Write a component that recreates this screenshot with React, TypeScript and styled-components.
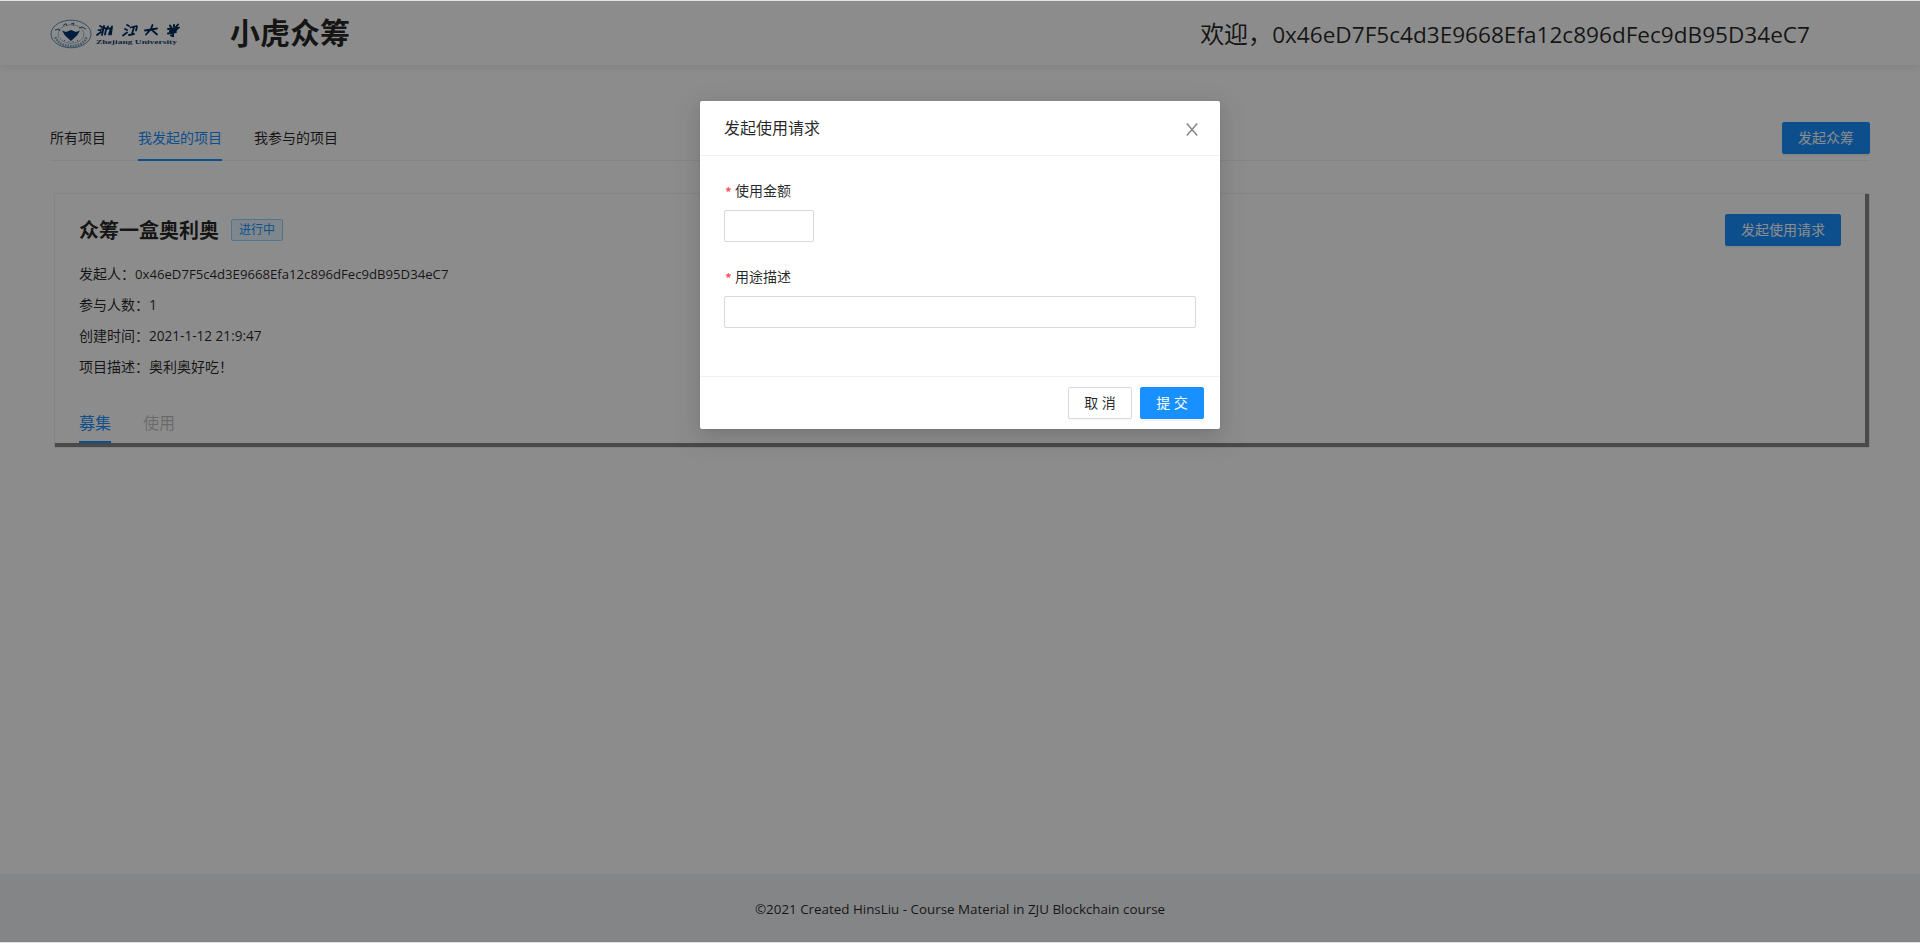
import React from 'react';
import styled, { createGlobalStyle, css } from 'styled-components';

const ADDRESS = '0x46eD7F5c4d3E9668Efa12c896dFec9dB95D34eC7';

const GlobalStyle = createGlobalStyle`
  *, *::before, *::after { box-sizing: border-box; }
  body {
    margin: 0;
    background: #dfe1e5;
    color: rgba(0, 0, 0, 0.85);
    font: 14px/22px 'Open Sans', 'Noto Sans CJK SC', sans-serif;
    font-weight: 400;
  }
  h1, h2, p { margin: 0; }
`;

const Page = styled.div`
  height: 943px;
  padding: 1px 0;
  overflow: hidden;
  position: relative;
`;

const Layout = styled.div`
  height: 941px;
  display: flex;
  flex-direction: column;
  background: #fff;
`;

const Header = styled.header`
  height: 64px;
  flex: none;
  display: flex;
  align-items: center;
  padding: 0 110px 0 50px;
  box-shadow: 0 2px 8px #e6e7e8;
`;

const Brand = styled.h1`
  margin-left: 50px;
  font-size: 30px;
  line-height: 64px;
  font-weight: 700;
`;

const Latin = styled.span<{ $scale: number }>`
  font-size: ${p => p.$scale}em;
`;

const Welcome = styled.div`
  margin-left: auto;
  padding-top: 2px;
  font-size: 24px;
  line-height: 62px;
`;

const Main = styled.main`
  flex: 1;
  padding: 50px 50px 0;
`;

const PageTabs = styled.nav`
  height: 46px;
  display: flex;
  gap: 32px;
  border-bottom: 1px solid #f0f0f0;
`;

const PageTab = styled.a<{ $active?: boolean }>`
  height: 46px;
  line-height: 46px;
  ${p => p.$active && css`
    color: #1890ff;
    border-bottom: 2px solid #1890ff;
  `}
`;

const TabAction = styled.div`
  margin-left: auto;
  padding-top: 7px;
`;

const Button = styled.button<{ $primary?: boolean; $spaced?: boolean }>`
  height: 32px;
  padding: 0 15px;
  border: 1px solid ${p => (p.$primary ? '#1890ff' : '#d9d9d9')};
  border-radius: 2px;
  background: ${p => (p.$primary ? '#1890ff' : '#fff')};
  color: ${p => (p.$primary ? '#fff' : 'rgba(0, 0, 0, 0.85)')};
  font: inherit;
  line-height: 30px;
  box-shadow: 0 2px 0 ${p => (p.$primary ? 'rgba(0, 0, 0, 0.045)' : 'rgba(0, 0, 0, 0.015)')};
  white-space: pre;
  ${p => p.$spaced && css`
    width: 64px;
  `}
`;

const Card = styled.section`
  height: 250px;
  margin: 32px 5px 0 4px;
  padding: 20px 24px 0 24px;
  border: 1px solid #f0f0f0;
  border-right: 0;
  border-bottom: 0;
  box-shadow: 2.5px 2.5px 1px 1.5px #888;
`;

const CardHead = styled.div`
  display: flex;
  justify-content: space-between;
`;

const CardTitle = styled.div`
  height: 32px;
  display: flex;
  align-items: center;
  gap: 12px;
`;

const ProjectName = styled.h2`
  padding-top: 2px;
  font-size: 20px;
  line-height: 30px;
  font-weight: 700;
`;

const Tag = styled.span`
  height: 22px;
  padding: 0 7px;
  border: 1px solid #91d5ff;
  border-radius: 2px;
  background: #e6f7ff;
  color: #1890ff;
  font-size: 12px;
  line-height: 20px;
`;

const Details = styled.div`
  margin-top: 12px;
`;

const Detail = styled.p`
  height: 31px;
  line-height: 31px;
`;

const CardTabs = styled.nav`
  margin-top: 18px;
  display: flex;
  gap: 32px;
`;

const CardTab = styled.a<{ $active?: boolean }>`
  height: 43px;
  line-height: 46px;
  font-size: 16px;
  color: ${p => (p.$active ? '#1890ff' : 'rgba(0, 0, 0, 0.25)')};
  ${p => p.$active && css`
    border-bottom: 2px solid #1890ff;
  `}
`;

const Footer = styled.footer`
  height: 68px;
  background: #f0f2f5;
  text-align: center;
  line-height: 70px;
`;

const Mask = styled.div`
  position: absolute;
  inset: 1px 0;
  display: flex;
  align-items: flex-start;
  justify-content: center;
  padding-top: 100px;
  background: rgba(0, 0, 0, 0.45);
`;

const Dialog = styled.div`
  width: 520px;
  background: #fff;
  border-radius: 2px;
  box-shadow: 0 3px 6px -4px rgba(0, 0, 0, 0.12), 0 6px 16px rgba(0, 0, 0, 0.08),
    0 9px 28px 8px rgba(0, 0, 0, 0.05);
`;

const DialogHead = styled.div`
  height: 55px;
  padding: 0 22px 0 24px;
  display: flex;
  align-items: center;
  justify-content: space-between;
  border-bottom: 1px solid #f0f0f0;
  font-size: 16px;
`;

const DialogBody = styled.form`
  padding: 24px;
`;

const Field = styled.div`
  margin-bottom: 24px;
`;

const Label = styled.label`
  display: flex;
  height: 22px;
  margin-bottom: 8px;
  &::before {
    content: '*';
    width: 11px;
    padding-left: 1px;
    color: #ff4d4f;
    font-family: 'Noto Sans CJK SC', sans-serif;
    font-weight: 500;
    line-height: 24px;
  }
`;

const Input = styled.input<{ $width: number }>`
  display: block;
  width: ${p => p.$width}px;
  height: 32px;
  border: 1px solid #d9d9d9;
  border-radius: 2px;
  background: #fff;
`;

const DialogFoot = styled.div`
  display: flex;
  justify-content: flex-end;
  gap: 8px;
  padding: 10px 16px;
  border-top: 1px solid #f0f0f0;
`;

const CloseMark = styled.svg`
  margin-top: 2px;
`;

const LogoText = styled.text`
  font-family: 'Liberation Serif', serif;
  font-size: 6.6px;
  font-weight: 700;
`;

const Logo = () => (
  <svg width="130" height="32" viewBox="0 0 130 32" fill="none" stroke="#003f7f">
    <ellipse cx="21" cy="17" rx="20" ry="13.8" strokeWidth=".8" opacity=".75" />
    <ellipse cx="21" cy="17" rx="13" ry="9.3" strokeWidth=".6" opacity=".6" />
    <path d="M5.500 20c3 12 28 12 31 0" strokeWidth="2.600" strokeDasharray="1.600 1" opacity=".5" />
    <path d="M12 13.500l4 1.500 5-2 5 2 4-1.500-3 5-6 5.500-6-5.500z" fill="#00366f" stroke="none" />
    <path d="M5 13l4-1 1 2M13 8.500l3-2 1 2M21 7l3-1-1 2.500M29 11l3-1 4 2" strokeWidth="1" opacity=".8" />
    <path d="M14 23l1 1M19 24v1M23 24v1M27 23l1 1" strokeWidth=".9" opacity=".7" />
    <g stroke="#002b5c" strokeWidth="1.8" strokeLinecap="round">
      <path d="M50 9l2 1M48.500 13l2 .5M47 18l4-3M54 9l-2 9M51 12.500l4-1.500M58 9.500l-2 3-1 5M57 12l4-1-2 6.500M62 9.500l-1 8" />
      <path d="M77 8l2 1M75 12l2 1M73 18.500l4-3M80.500 10.500l6-1.500M84 10l-2 7M79 18l5-1M87 9.500l-1 4" />
      <path d="M95 13.500l12-2M102.500 8l-1.500 4-5 5.500M102 13l5 4.500" />
    </g>
    <g stroke="#002b5c" strokeWidth="2" strokeLinecap="round">
      <path d="M120 8.500l1 1.500M124 8v1.500M128 7.500l-2 2.500M118 12l10-1-2 2M120 14l6-1-3 2M118 16.500l8-1.500M123 14v5l-2-.5" />
    </g>
    <LogoText x="46" y="27.300" textLength="81" lengthAdjust="spacingAndGlyphs" fill="#1d4270" stroke="none">
      Zhejiang University
    </LogoText>
  </svg>
);

const CloseIcon = () => (
  <CloseMark width="12" height="13" viewBox="0 0 12 13" fill="none" stroke="#868686" strokeWidth="1.5">
    <path d="M.8.5l10.400 12M11.200.5L.8 12.500" />
  </CloseMark>
);

export default function App() {
  return (
    <Page>
      <GlobalStyle />
      <Layout>
        <Header>
          <Logo />
          <Brand>小虎众筹</Brand>
          <Welcome>欢迎，<Latin $scale={0.941}>{ADDRESS}</Latin></Welcome>
        </Header>
        <Main>
          <PageTabs>
            <PageTab>所有项目</PageTab>
            <PageTab $active>我发起的项目</PageTab>
            <PageTab>我参与的项目</PageTab>
            <TabAction><Button $primary>发起众筹</Button></TabAction>
          </PageTabs>
          <Card>
            <CardHead>
              <CardTitle>
                <ProjectName>众筹一盒奥利奥</ProjectName>
                <Tag>进行中</Tag>
              </CardTitle>
              <Button $primary>发起使用请求</Button>
            </CardHead>
            <Details>
              <Detail>发起人：<Latin $scale={0.941}>{ADDRESS}</Latin></Detail>
              <Detail>参与人数：1</Detail>
              <Detail>创建时间：<Latin $scale={0.97}>2021-1-12 21:9:47</Latin></Detail>
              <Detail>项目描述：奥利奥好吃！</Detail>
            </Details>
            <CardTabs>
              <CardTab $active>募集</CardTab>
              <CardTab>使用</CardTab>
            </CardTabs>
          </Card>
        </Main>
        <Footer><Latin $scale={0.956}>©2021 Created HinsLiu - Course Material in ZJU Blockchain course</Latin></Footer>
      </Layout>
      <Mask>
        <Dialog role="dialog">
          <DialogHead>发起使用请求<CloseIcon /></DialogHead>
          <DialogBody>
            <Field><Label>使用金额</Label><Input $width={90} /></Field>
            <Field><Label>用途描述</Label><Input $width={472} /></Field>
          </DialogBody>
          <DialogFoot>
            <Button $spaced>取 消</Button>
            <Button $primary $spaced>提 交</Button>
          </DialogFoot>
        </Dialog>
      </Mask>
    </Page>
  );
}
